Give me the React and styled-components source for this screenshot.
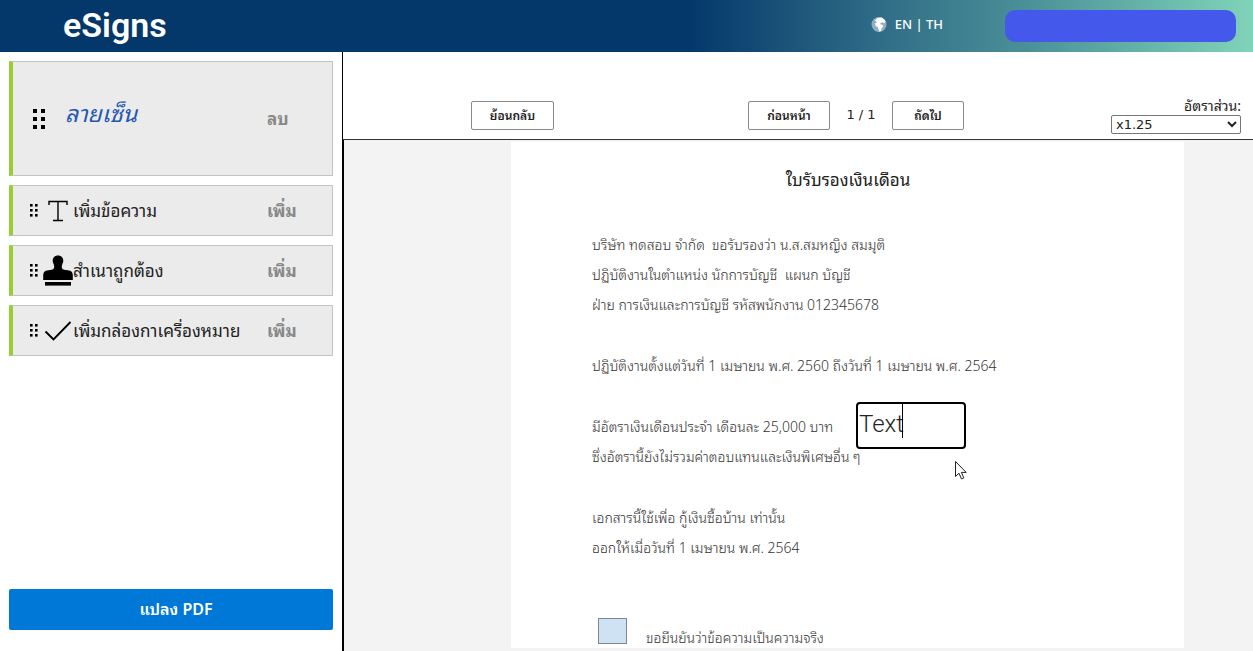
import React, { useState } from 'react';
import styled, { createGlobalStyle } from 'styled-components';

const GlobalStyle = createGlobalStyle`
  * {
    box-sizing: border-box;
  }

  body {
    margin: 0;
    background: #fff;
    color: #222;
    font-family: 'Noto Sans', 'Noto Sans Thai Looped', 'Noto Looped Thai', Loma, Garuda, Waree, 'Noto Sans Thai', sans-serif;
    font-size: 16px;
  }

  button, input, select {
    font-family: inherit;
  }
`;

const Layout = styled.div`
  display: flex;
  flex-direction: column;
  height: 100vh;
`;

const Header = styled.header`
  display: flex;
  align-items: center;
  flex: 0 0 52px;
  padding: 0 17px 0 63px;
  background: linear-gradient(90deg, #04386b 55%, #2f6c86 70%, #4b9098 82%, #80d4b9 100%);
  color: #fff;
`;

const Brand = styled.h1`
  margin: 0 auto 0 0;
  padding-bottom: 2px;
  font-family: Roboto, sans-serif;
  font-size: 34px;
  font-weight: 600;
  line-height: 50px;
`;

const Languages = styled.nav`
  display: flex;
  align-items: center;
  margin-right: 62px;
  padding-bottom: 4px;
  font-size: 13px;
  font-weight: 500;
  white-space: pre;

  svg {
    margin-right: 8px;
  }

  a {
    color: inherit;
    text-decoration: none;
  }
`;

const AccountButton = styled.button`
  width: 231px;
  height: 32px;
  border: 0;
  border-radius: 10px;
  background: #4459ec;
`;

const Main = styled.div`
  display: flex;
  flex: 1;
  min-height: 0;
`;

const Sidebar = styled.aside`
  display: flex;
  flex-direction: column;
  gap: 9px;
  flex: 0 0 343px;
  padding: 9px 9px 21px;
  border-right: 1px solid #000;
`;

const Tool = styled.div`
  display: flex;
  align-items: center;
  height: ${props => (props.$tall ? 115 : 51)}px;
  padding-left: ${props => (props.$tall ? 20 : 17)}px;
  border: 1px solid #c4c4c4;
  border-left: 4px solid #9acd32;
  background: #ebebeb;
`;

const ToolIcon = styled.span`
  display: flex;
  justify-content: center;
  width: 30px;
  margin-left: 3px;
`;

const ToolName = styled.span`
  flex: 1;
  padding-bottom: 2px;
  font-size: 17px;
  white-space: nowrap;
`;

const Signature = styled.span`
  flex: 1;
  margin-left: 18px;
  padding-bottom: 14px;
  color: #2457b0;
  font-size: 23px;
  font-style: italic;
  font-weight: 400;
`;

const ToolAction = styled.button`
  width: 65px;
  padding: 0 0 2px;
  border: 0;
  background: none;
  color: #888;
  font-size: 17px;
  font-weight: 700;
  text-align: left;
`;

const ConvertButton = styled.button`
  height: 41px;
  margin-top: auto;
  padding: 0 0 4px 10px;
  border: 0;
  border-radius: 2px;
  background: #0078d7;
  color: #fff;
  font-size: 16px;
  font-weight: 600;
`;

const Viewer = styled.main`
  display: flex;
  flex-direction: column;
  flex: 1;
  min-width: 0;
`;

const Toolbar = styled.div`
  display: flex;
  align-items: flex-end;
  flex: 0 0 88px;
  padding: 0 12px 5px 128px;
  border-bottom: 1px solid #333;
`;

const Pager = styled.div`
  display: flex;
  align-items: center;
  margin: 0 auto 4px 194px;
`;

const PageCount = styled.span`
  width: 62px;
  padding-bottom: 2px;
  font-family: 'DejaVu Sans', sans-serif;
  font-size: 13px;
  text-align: center;
`;

const ToolbarButton = styled.button`
  width: ${props => props.$width}px;
  height: 29px;
  padding: 0 0 2px;
  border: 1px solid #8a8a8a;
  border-radius: 2px;
  background: #fff;
  color: #222;
  font-size: 12px;
  font-weight: 600;
`;

const BackButton = styled(ToolbarButton)`
  margin-bottom: 4px;
`;

const Scale = styled.label`
  display: flex;
  flex-direction: column;
  align-items: flex-end;
  font-size: 14px;
  line-height: 18px;

  select {
    width: 130px;
    height: 19px;
    padding: 0;
    border: 1px solid #767676;
    border-radius: 2px;
    background: #fff;
    color: #222;
    font-family: 'DejaVu Sans', sans-serif;
    font-size: 13px;
  }
`;

const Canvas = styled.div`
  flex: 1;
  display: flex;
  min-height: 0;
  padding: 2px 69px 3px 167px;
  border-left: 1px solid #000;
  background: #f3f3f3;
`;

const Page = styled.article`
  position: relative;
  flex: 1;
  padding: 22px 80px 0 81px;
  background: #fff;
  color: #333;
  font-family: 'Noto Sans Thai Looped', 'Noto Looped Thai', Loma, Garuda, Waree, 'Noto Sans', sans-serif;
  font-size: 14px;
  font-weight: 300;
  line-height: 30px;
  white-space: pre;
`;

const PageTitle = styled.h2`
  margin: 0 0 35px;
  color: #222;
  font-size: 17px;
  font-weight: 400;
  line-height: 30px;
  text-align: center;
`;

const Paragraph = styled.p`
  margin: 0 0 31px;
`;

const Confirm = styled.label`
  display: flex;
  gap: 19px;
  margin-top: 56px;
  padding-left: 6px;

  input {
    appearance: none;
    width: 29px;
    height: 26px;
    margin: 0;
    border: 1px solid #7d8791;
    background: #cfe2f3;
  }

  span {
    padding-top: 6px;
    line-height: 26px;
  }
`;

const TextBox = styled.div`
  position: absolute;
  top: 260px;
  left: 345px;

  input {
    display: block;
    width: 110px;
    height: 47px;
    padding: 0 0 4px 1px;
    border: 2px solid #000;
    border-radius: 4px;
    outline: 0;
    background: #fff;
    color: #222;
    font-family: Roboto, sans-serif;
    font-size: 24px;
    font-weight: 300;
  }
`;

const Caret = styled.span`
  position: absolute;
  top: 2px;
  left: 46px;
  width: 1px;
  height: 34px;
  background: #000;
`;

const Pointer = styled.svg`
  position: absolute;
  top: 318px;
  left: 443px;
`;

const DragHandle = ({ large }) => {
  const dot = large ? 4 : 2.6;
  const step = large ? 8 : 5;
  return (
    <svg width={large ? 14 : 10} height={large ? 20 : 13} aria-hidden="true">
      {[0, 1, 2].map(row =>
        [0, 1].map(col => (
          <rect key={`${row}${col}`} x={col * step} y={row * step} width={dot} height={dot} />
        ))
      )}
    </svg>
  );
};

const GlobeIcon = () => (
  <svg width="16" height="17" viewBox="0 0 16 17" aria-hidden="true">
    <circle cx="8" cy="8.5" r="7.5" fill="#8fb0c4" />
    <path d="M4 4.5 6.5 2l4-.6L13 3.2l1.6 2.6-1.5 1.4-1.8-.9-1.8.8-.5 1.2 2.4.4.8 1.8-1.6 1.7-.6 2.6-1.6.9-1-2.6-.7-2.2-2-1L4 7.6l2-1.4Z" fill="#fff" />
  </svg>
);

const TextIcon = () => (
  <svg width="20" height="22" viewBox="0 0 20 22" fill="none" stroke="#000" strokeWidth="1.4" aria-hidden="true">
    <path d="M1 5V1.5h18V5M10 1.5v19M5 20.5h10" />
  </svg>
);

const StampIcon = () => (
  <svg width="30" height="31" viewBox="0 0 30 31" aria-hidden="true">
    <path d="M15 .5c3.2 0 5.3 2.3 5.3 5.1 0 2-.9 3.3-1.4 5-.5 2 .2 3.8 2.3 4.2l5 .8c2.3.4 3.6 2.3 3.6 4.6V25H.2v-4.8c0-2.3 1.3-4.2 3.6-4.6l5-.8c2.1-.4 2.8-2.2 2.3-4.2-.5-1.7-1.4-3-1.4-5C9.7 2.8 11.8.5 15 .5Z" />
    <rect x="2" y="27" width="26" height="3.6" />
  </svg>
);

const CheckIcon = () => (
  <svg width="28" height="20" viewBox="0 0 28 20" fill="none" stroke="#000" strokeWidth="1.9" aria-hidden="true">
    <path d="M1.5 10.5 9.5 18.5 26.5 1" />
  </svg>
);

const tools = [
  { name: 'เพิ่มข้อความ', icon: <TextIcon /> },
  { name: 'สำเนาถูกต้อง', icon: <StampIcon /> },
  { name: 'เพิ่มกล่องกาเครื่องหมาย', icon: <CheckIcon /> },
];

const paragraphs = [
  [
    'บริษัท ทดสอบ จำกัด  ขอรับรองว่า น.ส.สมหญิง สมมุติ',
    'ปฏิบัติงานในตำแหน่ง นักการบัญชี  แผนก บัญชี',
    'ฝ่าย การเงินและการบัญชี รหัสพนักงาน 012345678',
  ],
  ['ปฏิบัติงานตั้งแต่วันที่ 1 เมษายน พ.ศ. 2560 ถึงวันที่ 1 เมษายน พ.ศ. 2564'],
  [
    'มีอัตราเงินเดือนประจำ เดือนละ 25,000 บาท',
    'ซึ่งอัตรานี้ยังไม่รวมค่าตอบแทนและเงินพิเศษอื่น ๆ',
  ],
  ['เอกสารนี้ใช้เพื่อ กู้เงินซื้อบ้าน เท่านั้น', 'ออกให้เมื่อวันที่ 1 เมษายน พ.ศ. 2564'],
];

const App = () => {
  const [text, setText] = useState('Text');
  const [scale, setScale] = useState('x1.25');

  return (
    <Layout>
      <GlobalStyle />
      <Header>
        <Brand>eSigns</Brand>
        <Languages>
          <GlobeIcon />
          <a href="#en">EN</a> | <a href="#th">TH</a>
        </Languages>
        <AccountButton aria-label="Account" />
      </Header>
      <Main>
        <Sidebar>
          <Tool $tall>
            <DragHandle large />
            <Signature>ลายเซ็น</Signature>
            <ToolAction>ลบ</ToolAction>
          </Tool>
          {tools.map(tool => (
            <Tool key={tool.name}>
              <DragHandle />
              <ToolIcon>{tool.icon}</ToolIcon>
              <ToolName>{tool.name}</ToolName>
              <ToolAction>เพิ่ม</ToolAction>
            </Tool>
          ))}
          <ConvertButton>แปลง PDF</ConvertButton>
        </Sidebar>
        <Viewer>
          <Toolbar>
            <BackButton $width={83}>ย้อนกลับ</BackButton>
            <Pager>
              <ToolbarButton $width={82}>ก่อนหน้า</ToolbarButton>
              <PageCount>1 / 1</PageCount>
              <ToolbarButton $width={72}>ถัดไป</ToolbarButton>
            </Pager>
            <Scale>
              อัตราส่วน:
              <select value={scale} onChange={e => setScale(e.target.value)}>
                <option>x1.00</option>
                <option>x1.25</option>
                <option>x1.50</option>
              </select>
            </Scale>
          </Toolbar>
          <Canvas>
            <Page>
              <PageTitle>ใบรับรองเงินเดือน</PageTitle>
              {paragraphs.map(lines => (
                <Paragraph key={lines[0]}>{lines.join('\n')}</Paragraph>
              ))}
              <Confirm>
                <input type="checkbox" />
                <span>ขอยืนยันว่าข้อความเป็นความจริง</span>
              </Confirm>
              <TextBox>
                <input aria-label="Text" value={text} onChange={e => setText(e.target.value)} />
                <Caret />
              </TextBox>
              <Pointer width="14" height="21" viewBox="0 0 14 21" aria-hidden="true">
                <path d="M1.5 1.5v15l3.500-3.300 2.400 5.700 2.400-1-2.400-5.500h4.800Z" fill="#fff" stroke="#222" />
              </Pointer>
            </Page>
          </Canvas>
        </Viewer>
      </Main>
    </Layout>
  );
};

export default App;
